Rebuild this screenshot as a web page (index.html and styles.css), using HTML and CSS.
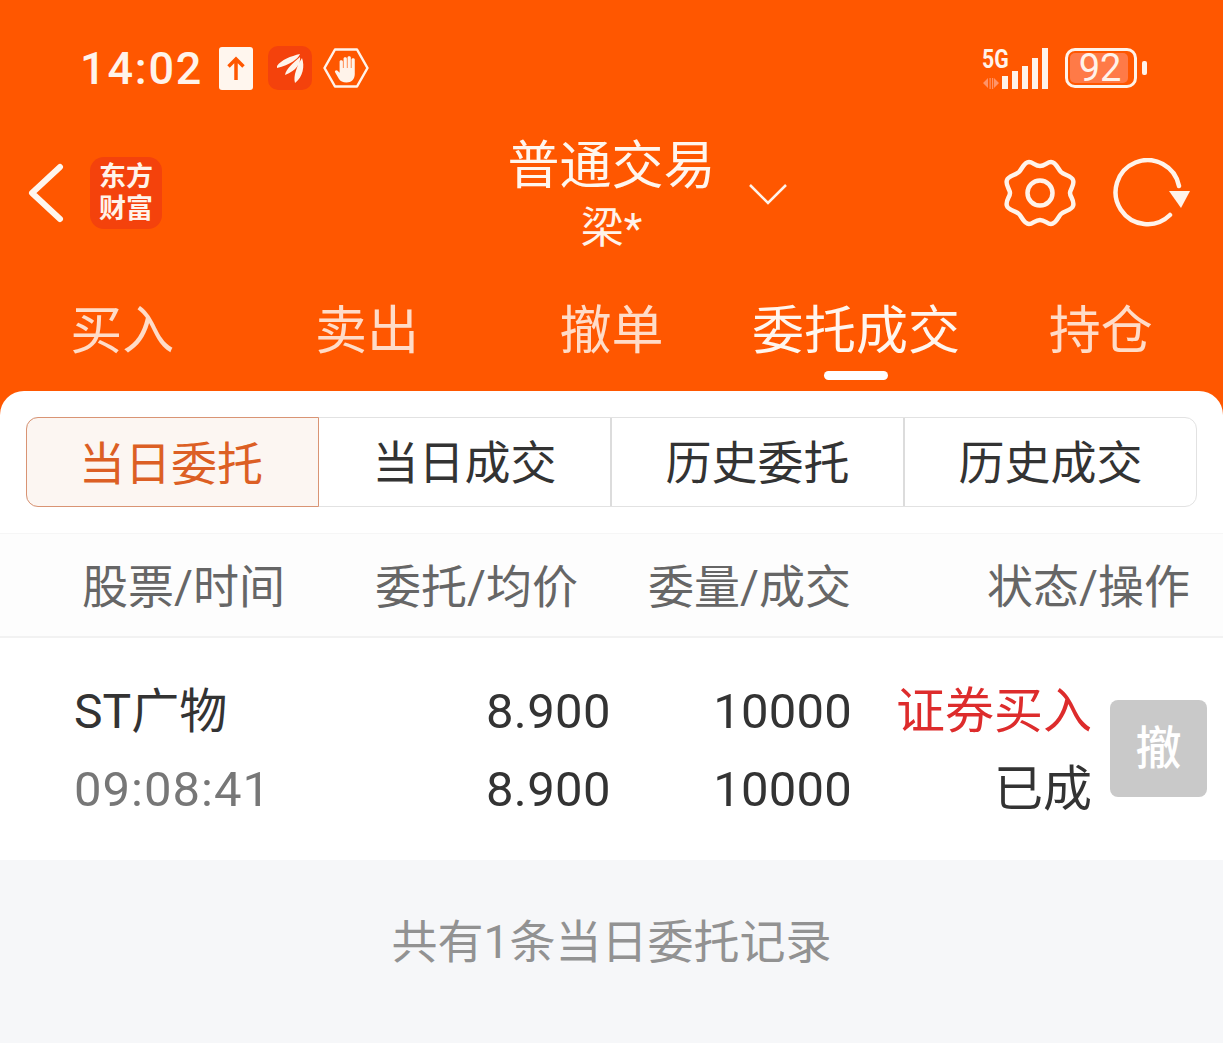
FILE: index.html
```html
<!DOCTYPE html>
<html lang="zh-CN">
<head>
    <meta charset="UTF-8">
    <title>普通交易</title>
    <link rel="stylesheet" href="styles.css">
</head>
<body>
    <div class="top">
        <div class="status-bar">
            <div class="status-left">
                <span class="clock">14:02</span>
                <svg class="ic-upload" viewBox="0 0 34 43"><rect width="34" height="43" rx="3" fill="#fff6ee"/><path d="M17 33V12M9.500 19.500L17 12l7.500 7.500" fill="none" stroke="#ff5700" stroke-width="3.500"/></svg>
                <svg class="ic-app" viewBox="0 0 44 44"><rect width="44" height="44" rx="10" fill="#f4420c"/><path d="M9 20C13 14 23 10 32 8 30 13 22 19 9 22ZM17 29C18 23 25 17 32 11 33 17 28 25 17 29ZM27 37C25 30 29 20 34 12 37 20 35 31 27 37Z" fill="#fff3ea"/></svg>
                <svg class="ic-hand" viewBox="0 0 46 40"><path d="M12 1.500H34L44.500 20 34 38.500H12L1.500 20Z" fill="none" stroke="#fff3ea" stroke-width="2.500" stroke-linejoin="round"/><path transform="translate(-1 1) scale(1.1 1)" d="M16 12.500c0-1.800 3-1.800 3 0V19h.6V9.500c0-1.800 3-1.800 3 0V19h.6V8.500c0-1.800 3-1.800 3 0V19h.6V10.500c0-1.800 3-1.800 3 0V25c0 5-3 8.500-7.500 8.500-3.500 0-5.500-1.300-7-3.800L12 23.500c-1-1.700 1-3 2.200-1.700l1.800 2Z" fill="#fff3ea"/></svg>
            </div>
            <div class="status-right">
                <svg class="net" viewBox="0 -5 68 46">
                    <text class="net-5g" transform="translate(0 20) scale(0.85 1)">5G</text>
                    <path d="M1 35l5-5v10ZM7.500 30h1.200v11H7.500ZM10 30h1.200v11H10ZM12 30l5 5-5 5Z" fill="#ff9468"/>
                    <path d="M20 28h6v13h-6ZM30 23h6v18h-6ZM40 18h6v23h-6ZM50 10h6v31h-6ZM60 0h6v41h-6Z" fill="#fff3ea"/>
                </svg>
                <div class="battery">
                    <div class="battery-body"><span class="battery-fill"></span><span class="battery-num">92</span></div>
                    <span class="battery-cap"></span>
                </div>
            </div>
        </div>
        <div class="header">
            <div class="header-left">
                <svg class="ic-back" viewBox="0 0 38 60"><path d="M33 4L5 30l28 26" fill="none" stroke="#fff6ee" stroke-width="6" stroke-linecap="round" stroke-linejoin="round"/></svg>
                <div class="logo">东方<br>财富</div>
            </div>
            <div class="header-title">
                <div class="title">普通交易</div>
                <div class="subtitle">梁*</div>
                <svg class="ic-down" viewBox="0 0 40 24"><path d="M2 3l18 18L38 3" fill="none" stroke="#fff3ea" stroke-width="2.500"/></svg>
            </div>
            <div class="header-right">
                <svg class="ic-gear" viewBox="0 0 74 74"><path d="M26 6c4 0 6 4 11 4s7-4 11-4c5 0 7 7 10 10s11 4 12 8c2 5-3 9-3 13s5 8 3 13c-1 4-9 5-12 8s-5 10-10 10c-4 0-6-4-11-4s-7 4-11 4c-5 0-7-7-10-10s-11-4-12-8c-2-5 3-9 3-13s-5-8-3-13c1-4 9-5 12-8s5-10 10-10Z" fill="none" stroke="#fff3ea" stroke-width="4.500"/><circle cx="37" cy="37" r="12.500" fill="none" stroke="#fff3ea" stroke-width="4.500"/></svg>
                <svg class="ic-refresh" viewBox="0 0 78 70"><path d="M57 57A32 32 0 1 1 66 28" fill="none" stroke="#fff3ea" stroke-width="4.500" stroke-linecap="round"/><path d="M56 33H77L68 50Z" fill="#fff3ea"/></svg>
            </div>
        </div>
        <div class="tabs">
            <div class="tab">买入</div>
            <div class="tab">卖出</div>
            <div class="tab">撤单</div>
            <div class="tab active">委托成交</div>
            <div class="tab">持仓</div>
        </div>
    </div>
    <div class="panel">
        <div class="segment">
            <div class="seg-item active">当日委托</div>
            <div class="seg-item">当日成交</div>
            <div class="seg-item">历史委托</div>
            <div class="seg-item">历史成交</div>
        </div>
        <div class="table-head">
            <div class="th-name">股票/时间</div>
            <div class="th-price">委托/均价</div>
            <div class="th-qty">委量/成交</div>
            <div class="th-state">状态/操作</div>
        </div>
        <div class="row">
            <div class="col-name">
                <div class="stock">ST广物</div>
                <div class="time">09:08:41</div>
            </div>
            <div class="col-price">
                <div>8.900</div>
                <div>8.900</div>
            </div>
            <div class="col-qty">
                <div>10000</div>
                <div>10000</div>
            </div>
            <div class="col-state">
                <div class="buy">证券买入</div>
                <div>已成</div>
            </div>
            <div class="cancel-btn">撤</div>
        </div>
        <div class="footer">共有1条当日委托记录</div>
    </div>
</body>
</html>
```

FILE: styles.css
```css
body {
    margin: 0;
    height: 1043px;
    overflow: hidden;
    display: flex;
    flex-direction: column;
    background: #ff5700;
    font-family: 'Roboto', 'Noto Sans CJK SC', sans-serif;
    color: #333;
}
.top {
    height: 391px;
    display: flex;
    flex-direction: column;
    color: #fff3ea;
}
.status-bar {
    height: 136px;
    box-sizing: border-box;
    padding: 0 76px 0 80px;
    display: flex;
    justify-content: space-between;
    align-items: center;
}
.status-left {
    display: flex;
    align-items: center;
}
.clock {
    font-size: 45px;
    font-weight: 500;
    letter-spacing: 1.800px;
    margin-right: 16px;
}
.ic-upload {
    width: 34px;
    height: 43px;
    margin-right: 15px;
}
.ic-app {
    width: 44px;
    height: 44px;
    margin-right: 11px;
}
.ic-hand {
    width: 46px;
    height: 40px;
}
.status-right {
    display: flex;
    align-items: center;
    gap: 15px;
}
.net {
    width: 68px;
    height: 46px;
    margin-top: -5px;
}
.net-5g {
    font-size: 25px;
    font-weight: 700;
    fill: #fff3ea;
}
.battery {
    display: flex;
    align-items: center;
    gap: 5px;
}
.battery-body {
    width: 72px;
    height: 40px;
    box-sizing: border-box;
    border: 3px solid #fff3ea;
    border-radius: 10px;
    position: relative;
    display: flex;
    align-items: center;
    justify-content: center;
}
.battery-fill {
    position: absolute;
    left: 2px;
    top: 2px;
    bottom: 2px;
    width: 58px;
    background: #ff7a47;
    border-radius: 5px;
}
.battery-num {
    position: relative;
    font-size: 38px;
    line-height: 34px;
    margin-right: 2px;
}
.battery-cap {
    width: 5px;
    height: 14px;
    background: #fff3ea;
    border-radius: 2px;
}
.header {
    height: 114px;
    padding: 0 32px 0 27px;
    display: flex;
    align-items: center;
    position: relative;
}
.header-left {
    display: flex;
    align-items: center;
    gap: 25px;
}
.ic-back {
    width: 38px;
    height: 60px;
}
.logo {
    width: 72px;
    height: 72px;
    background: #f4420c;
    border-radius: 14px;
    font-size: 27px;
    font-weight: 700;
    line-height: 32px;
    text-align: center;
    padding-top: 4px;
    box-sizing: border-box;
}
.header-title {
    position: absolute;
    left: 0;
    right: 0;
    top: 0;
    text-align: center;
}
.title {
    font-size: 52px;
    line-height: 60px;
    margin-top: 1px;
    color: #fff6ee;
}
.subtitle {
    font-size: 43px;
    line-height: 50px;
    margin-top: 6px;
}
.ic-down {
    position: absolute;
    left: 748px;
    top: 46px;
    width: 40px;
    height: 24px;
}
.header-right {
    margin-left: auto;
    display: flex;
    align-items: center;
    gap: 36px;
}
.ic-gear {
    width: 74px;
    height: 74px;
}
.ic-refresh {
    width: 78px;
    height: 70px;
}
.tabs {
    flex: 1;
    display: flex;
}
.tab {
    flex: 1;
    text-align: center;
    font-size: 52px;
    line-height: 60px;
    padding-top: 52px;
    color: #ffdcc8;
    position: relative;
}
.tab.active {
    color: #fff6ee;
}
.tab.active::after {
    content: "";
    position: absolute;
    left: 50%;
    top: 121px;
    width: 64px;
    height: 9px;
    margin-left: -32px;
    border-radius: 5px;
    background: #fff;
}
.panel {
    flex: 1;
    background: #fff;
    border-radius: 24px 24px 0 0;
    display: flex;
    flex-direction: column;
}
.segment {
    margin: 26px;
    height: 90px;
    box-sizing: border-box;
    display: flex;
    border: 1px solid #e2e2e2;
    border-radius: 12px;
}
.seg-item {
    flex: 1;
    font-size: 46px;
    line-height: 90px;
    text-align: center;
    border-right: 2px solid #dcdcdc;
    color: #333;
}
.seg-item:last-child {
    border-right: none;
}
.seg-item.active {
    margin: -1px 0 -1px -1px;
    line-height: 92px;
    text-indent: -3px;
    color: #dc5f24;
    background: #fcf6f2;
    border: 1px solid #d99474;
    border-radius: 12px 0 0 12px;
}
.table-head {
    height: 105px;
    box-sizing: border-box;
    padding-bottom: 4px;
    display: flex;
    align-items: center;
    font-size: 46px;
    color: #666;
    background: #fdfdfd;
    border-top: 1px solid #f6f6f6;
    border-bottom: 2px solid #f2f2f2;
}
.th-name {
    width: 283px;
    padding-left: 82px;
    box-sizing: border-box;
    white-space: nowrap;
}
.th-price {
    width: 295px;
    text-align: right;
}
.th-qty {
    width: 273px;
    text-align: right;
}
.th-state {
    width: 339px;
    text-align: right;
}
.row {
    height: 222px;
    display: flex;
    align-items: center;
    font-size: 49px;
    line-height: 78px;
}
.col-name {
    width: 350px;
    padding: 3px 0 0 74px;
    box-sizing: border-box;
}
.stock {
    font-size: 48px;
}
.time {
    color: #777;
    letter-spacing: 1px;
}
.col-price {
    width: 261px;
    padding-top: 3px;
    text-align: right;
    letter-spacing: 0.400px;
}
.col-qty {
    width: 241px;
    padding-top: 3px;
    text-align: right;
    letter-spacing: 0.200px;
}
.col-state {
    width: 240px;
    padding-top: 3px;
    text-align: right;
}
.buy {
    color: #dd2c2c;
}
.cancel-btn {
    width: 97px;
    height: 97px;
    margin: -2px 0 0 18px;
    background: #c9c9c9;
    border-radius: 8px;
    color: #fff;
    font-size: 46px;
    font-weight: 500;
    line-height: 97px;
    text-align: center;
}
.footer {
    flex: 1;
    background: #f6f7f9;
    color: #929292;
    font-size: 46px;
    line-height: 164px;
    text-align: center;
}
```
